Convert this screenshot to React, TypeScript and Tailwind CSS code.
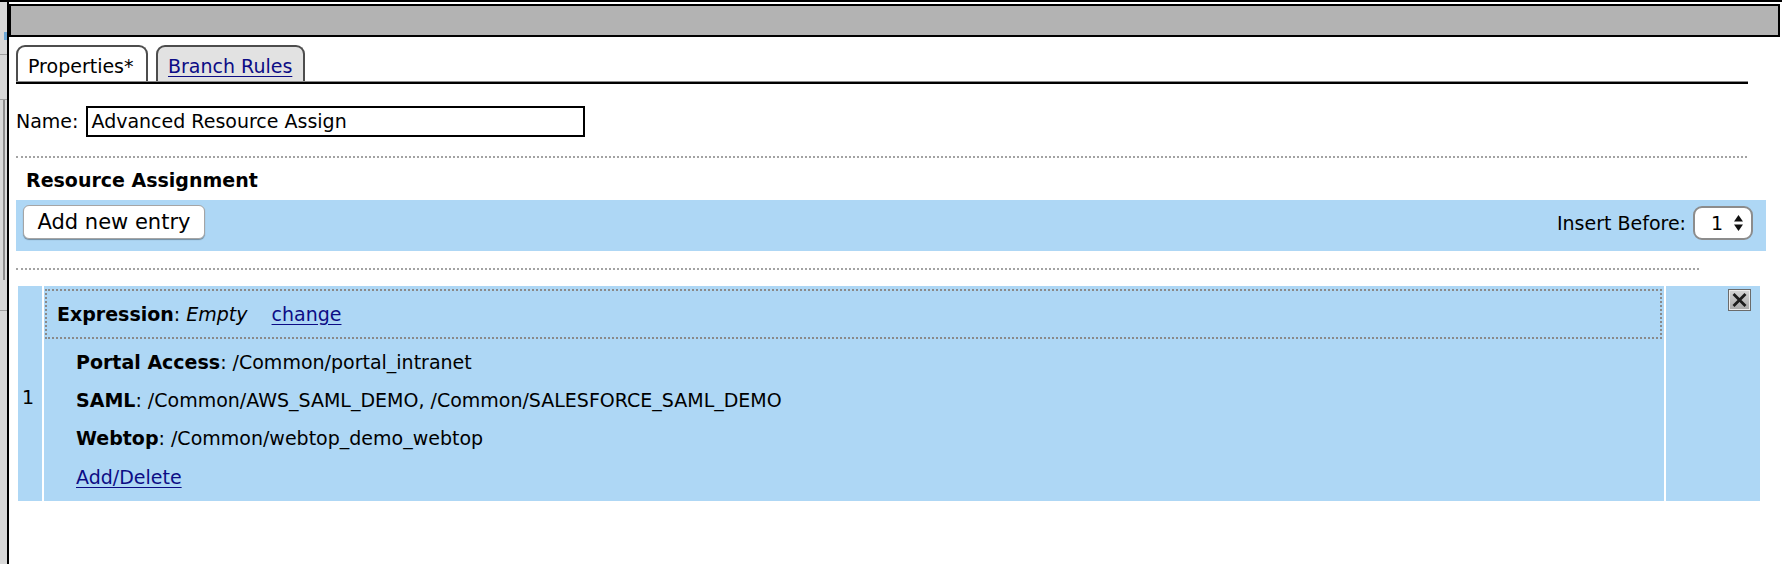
import React from 'react';

const Tab: React.FC<{ label: string; active?: boolean; width: string }> = ({ label, active, width }) => {
  return (
    <div
      className={`${width} h-[36px] border-2 border-b-0 border-[#4d4d4d] rounded-t-[9px] flex items-center pl-[10px] pt-[4px] ${
        active ? 'bg-white' : 'bg-[#e2e2e2]'
      }`}
    >
      {active ? (
        <span>{label}</span>
      ) : (
        <span className="text-[#0c0c85] underline underline-offset-[3px]">{label}</span>
      )}
    </div>
  );
};

const CloseIcon: React.FC = () => (
  <svg width="23" height="22" viewBox="0 0 23 22">
    <defs>
      <linearGradient id="xg" x1="0" y1="0" x2="0" y2="1">
        <stop offset="0" stopColor="#d6d6d6" />
        <stop offset="1" stopColor="#a6a6a6" />
      </linearGradient>
    </defs>
    <rect x="0.5" y="0.5" width="22" height="21" fill="url(#xg)" stroke="#6b6b6b" />
    <rect x="1.5" y="1.5" width="20" height="19" fill="none" stroke="#ececec" strokeWidth="1" />
    <path d="M6.5 6 L16.5 16 M16.5 6 L6.5 16" stroke="#1c1c1c" strokeWidth="2.8" strokeLinecap="square" />
  </svg>
);

const SelectArrows: React.FC = () => (
  <svg width="11" height="20" viewBox="0 0 11 20">
    <path d="M1 8.5 L5.5 2 L10 8.5 Z" fill="#111" />
    <path d="M1 11.5 L5.5 18 L10 11.5 Z" fill="#111" />
  </svg>
);

const Field: React.FC<{ name: string; value: string }> = ({ name, value }) => (
  <div className="h-[38px] flex items-center">
    <span className="font-bold">{name}</span>
    <span>: {value}</span>
  </div>
);

const App: React.FC = () => {
  return (
    <div className="w-[1782px] h-[564px] bg-white flex border-t-2 border-black overflow-hidden font-['DejaVu_Sans',sans-serif] text-[19px] text-black leading-none">
      {/* Neighbour window strip */}
      <div className="w-[7px] shrink-0 bg-[#d9d9d9] flex flex-col">
        <div className="h-[30px]" />
        <div className="h-[8px] w-[3px] ml-[4px] bg-[#6fa9d8]" />
        <div className="h-[14px]" />
        <div className="h-[1px] bg-[#a0a0a0]" />
        <div className="h-[44px]" />
        <div className="h-[1px] bg-[#a0a0a0]" />
        <div className="h-[180px] w-[2px] ml-[3px] bg-[#8c8c8c]" />
        <div className="h-[30px]" />
        <div className="h-[1px] bg-[#a0a0a0]" />
      </div>
      <div className="w-[2px] shrink-0 bg-black" />

      {/* Main panel */}
      <div className="flex-1 flex flex-col">
        <div className="mt-[2px] mr-[2px] h-[33px] border-2 border-black bg-[#b3b3b3]" />

        {/* Tabs */}
        <div className="ml-[7px] mr-[34px] mt-[8px]">
          <div className="flex items-end gap-[8px]">
            <Tab label="Properties*" active width="w-[132px]" />
            <Tab label="Branch Rules" width="w-[149px]" />
          </div>
          <div className="h-[3px] border-t border-[#8a8a8a] bg-black" />
        </div>

        {/* Name */}
        <div className="ml-[7px] mt-[22px] flex items-center gap-[8px]">
          <span>Name:</span>
          <div className="w-[499px] h-[31px] border-2 border-black flex items-center pl-[3px]">
            Advanced Resource Assign
          </div>
        </div>

        <div className="ml-[7px] mr-[35px] mt-[19px] border-t-2 border-dotted border-[#a3a3a3]" />

        <div className="ml-[17px] mt-[10px] h-[24px] flex items-center font-bold">Resource Assignment</div>

        {/* Toolbar */}
        <div className="ml-[7px] mr-[16px] mt-[8px] h-[51px] bg-[#aed7f5] flex items-start justify-between pl-[7px] pr-[13px] pt-[5px]">
          <button className="w-[182px] h-[34px] bg-white border border-[#a5a5a5] rounded-[6px] shadow-[0_1px_1px_rgba(0,0,0,0.35)] text-[21px] flex items-center justify-center">
            Add new entry
          </button>
          <div className="flex items-center gap-[7px] pt-[1px]">
            <span>Insert Before:</span>
            <div className="w-[60px] h-[34px] bg-white border-2 border-[#8c8c8c] rounded-[9px] flex items-center justify-end gap-[10px] pr-[7px]">
              <span>1</span>
              <SelectArrows />
            </div>
          </div>
        </div>

        <div className="ml-[7px] w-[1683px] mt-[17px] border-t-2 border-dotted border-[#a3a3a3]" />

        {/* Entry */}
        <div className="ml-[9px] w-[1742px] mt-[16px] h-[215px] flex gap-[2px]">
          <div className="w-[24px] bg-[#aed7f5] flex items-center pl-[4px] pt-[8px]">1</div>
          <div className="flex-1 bg-[#aed7f5] flex flex-col pl-[1px] pr-[2px] pt-[3px]">
            <div className="h-[50px] border-2 border-dotted border-[#8a8a8a] flex items-center pl-[10px] pt-[1px]">
              <span className="font-bold">Expression</span>
              <span>:&nbsp;</span>
              <span className="italic">Empty</span>
              <span className="ml-[24px] text-[#0c0c85] underline underline-offset-[3px]">change</span>
            </div>
            <div className="pl-[31px] mt-[4px]">
              <Field name="Portal Access" value="/Common/portal_intranet" />
              <Field name="SAML" value="/Common/AWS_SAML_DEMO, /Common/SALESFORCE_SAML_DEMO" />
              <Field name="Webtop" value="/Common/webtop_demo_webtop" />
              <div className="h-[38px] flex items-center pt-[2px]">
                <span className="text-[#0c0c85] underline underline-offset-[3px]">Add/Delete</span>
              </div>
            </div>
          </div>
          <div className="w-[94px] bg-[#aed7f5] flex justify-end pr-[9px] pt-[3px]">
            <div className="h-[22px]">
              <CloseIcon />
            </div>
          </div>
        </div>
      </div>
    </div>
  );
};

export default App;
